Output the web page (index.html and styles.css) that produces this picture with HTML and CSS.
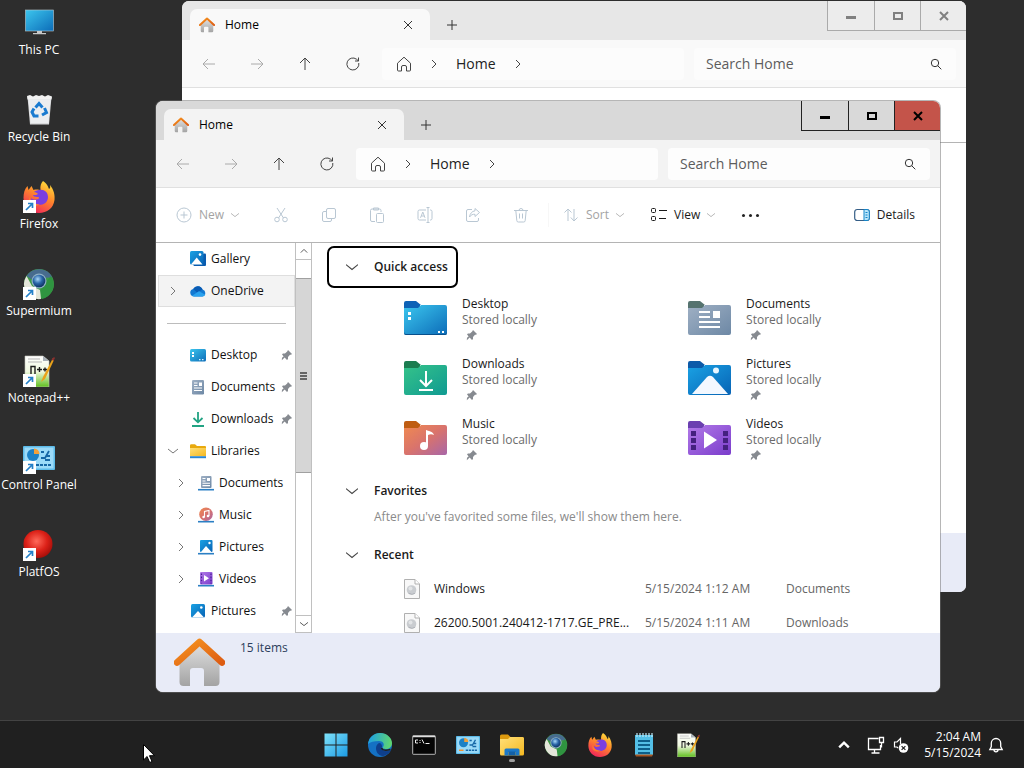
FILE: index.html
```html
<!DOCTYPE html>
<html lang="en">
<head>
	<meta charset="UTF-8">
	<title>Desktop</title>
	<link rel="stylesheet" href="styles.css">
</head>
<body>
	<!-- icon sprite -->
	<svg class="sprite" aria-hidden="true">
		<defs>
			<linearGradient id="gBlue" x1="0" y1="0" x2="1" y2="1"><stop offset="0" stop-color="#3cc6ee"/><stop offset="1" stop-color="#0c6cb8"/></linearGradient>
			<linearGradient id="gGreen" x1="0" y1="0" x2="1" y2="1"><stop offset="0" stop-color="#35c389"/><stop offset="1" stop-color="#109a92"/></linearGradient>
			<linearGradient id="gMusic" x1="0" y1="0" x2="1" y2="1"><stop offset="0" stop-color="#f08a50"/><stop offset=".5" stop-color="#d9736c"/><stop offset="1" stop-color="#a866a8"/></linearGradient>
			<linearGradient id="gDoc" x1="0" y1="0" x2="1" y2="1"><stop offset="0" stop-color="#9fb0c4"/><stop offset="1" stop-color="#6d88a5"/></linearGradient>
			<linearGradient id="gPic" x1="0" y1="0" x2="1" y2="1"><stop offset="0" stop-color="#1aa2e4"/><stop offset="1" stop-color="#0763b5"/></linearGradient>
			<linearGradient id="gVid" x1="0" y1="0" x2="1" y2="1"><stop offset="0" stop-color="#b27ae8"/><stop offset="1" stop-color="#7a3ccb"/></linearGradient>
			<linearGradient id="gYellow" x1="0" y1="0" x2="1" y2="1"><stop offset="0" stop-color="#ffe07a"/><stop offset="1" stop-color="#f5b820"/></linearGradient>
			<linearGradient id="gWin" x1="0" y1="0" x2="1" y2="1"><stop offset="0" stop-color="#7fe3fb"/><stop offset="1" stop-color="#1c9be4"/></linearGradient>
			<linearGradient id="gWall" x1="0" y1="0" x2="0" y2="1"><stop offset="0" stop-color="#dedede"/><stop offset="1" stop-color="#a3a3a3"/></linearGradient>
			<linearGradient id="gRoof" x1="0" y1="0" x2="1" y2="1"><stop offset="0" stop-color="#f69420"/><stop offset="1" stop-color="#dd5c12"/></linearGradient>
			<linearGradient id="gFox" x1=".8" y1="0" x2=".3" y2="1"><stop offset="0" stop-color="#ffe23e"/><stop offset=".45" stop-color="#ff8a2a"/><stop offset="1" stop-color="#f0235c"/></linearGradient>
			<linearGradient id="gEdge" x1="0" y1=".3" x2="1" y2=".4"><stop offset="0" stop-color="#1c9fe6"/><stop offset="1" stop-color="#60d66e"/></linearGradient>
			<linearGradient id="gNpp" x1="0" y1="0" x2="0" y2="1"><stop offset="0" stop-color="#ffffff"/><stop offset=".5" stop-color="#f0f8e0"/><stop offset="1" stop-color="#5fbf1e"/></linearGradient>
			<radialGradient id="gRed" cx=".45" cy=".4" r=".6"><stop offset="0" stop-color="#ff6a5a"/><stop offset=".6" stop-color="#dc2118"/><stop offset="1" stop-color="#a80f0a"/></radialGradient>
			<radialGradient id="gBall" cx=".4" cy=".35" r=".7"><stop offset="0" stop-color="#a8d8f8"/><stop offset=".5" stop-color="#2a66a8"/><stop offset="1" stop-color="#0b2b5c"/></radialGradient>
		</defs>

		<symbol id="i-house" viewBox="0 0 51 49">
			<path d="M25.500 7 8 23v21a4 4 0 0 0 4 4h6.500V33a3 3 0 0 1 3-3h8a3 3 0 0 1 3 3v15H44a4 4 0 0 0 4-4V23z" transform="translate(-2.500 0)" fill="url(#gWall)"/>
			<path d="M3 24.500 25.500 4 48 24.500" fill="none" stroke="url(#gRoof)" stroke-width="6.500" stroke-linecap="round" stroke-linejoin="round"/>
		</symbol>

		<symbol id="i-back" viewBox="0 0 16 16"><path d="M14 8H2M7 3 2 8l5 5"/></symbol>
		<symbol id="i-forward" viewBox="0 0 16 16"><path d="M2 8h12M9 3l5 5-5 5"/></symbol>
		<symbol id="i-up" viewBox="0 0 16 16"><path d="M8 14V2M3 7l5-5 5 5"/></symbol>
		<symbol id="i-refresh" viewBox="0 0 16 16"><path d="M13.800 7A6 6 0 1 1 11.500 3.200l1.800 1.600M13.500 1.500v3.500H10"/></symbol>
		<symbol id="i-home" viewBox="0 0 16 16"><path d="M1.500 7.200 8 1.200l6.500 6V14a1 1 0 0 1-1 1h-3v-4a1.500 1.500 0 0 0-1.500-1.500H7A1.500 1.500 0 0 0 5.500 11v4h-3a1 1 0 0 1-1-1z"/></symbol>
		<symbol id="i-right" viewBox="0 0 10 10"><path d="M3 1l4 4-4 4"/></symbol>
		<symbol id="i-down" viewBox="0 0 10 10"><path d="M0 3l5 4 5-4"/></symbol>
		<symbol id="i-upchev" viewBox="0 0 10 10"><path d="M1 7l4-4 4 4"/></symbol>
		<symbol id="i-search" viewBox="0 0 12 12"><circle cx="5" cy="5" r="3.700"/><path d="M7.700 7.700 11.300 11.300"/></symbol>
		<symbol id="i-x" viewBox="0 0 10 10"><path d="M1 1l8 8M9 1 1 9"/></symbol>
		<symbol id="i-plus" viewBox="0 0 10 10"><path d="M5 0v10M0 5h10"/></symbol>

		<symbol id="i-new" viewBox="0 0 16 16"><circle cx="8" cy="8" r="7"/><path d="M8 4.500v7M4.500 8h7"/></symbol>
		<symbol id="i-cut" viewBox="0 0 16 16"><path d="M4 1l6.500 10M12 1 5.500 11"/><circle cx="4" cy="12.500" r="2.300"/><circle cx="12" cy="12.500" r="2.300"/></symbol>
		<symbol id="i-copy" viewBox="0 0 16 16"><rect x="5.500" y="1.500" width="9" height="10" rx="1.500"/><path d="M5.500 4.500H3A1.500 1.500 0 0 0 1.500 6v7A1.500 1.500 0 0 0 3 14.500h6a1.500 1.500 0 0 0 1.500-1.500v-1.500"/></symbol>
		<symbol id="i-paste" viewBox="0 0 16 16"><path d="M6 14.500H3A1.500 1.500 0 0 1 1.500 13V3.500A1.500 1.500 0 0 1 3 2h7.500A1.500 1.500 0 0 1 12 3.500V5M4.500 1h5v2h-5z"/><rect x="7.500" y="6.500" width="7" height="9" rx="1"/></symbol>
		<symbol id="i-rename" viewBox="0 0 16 16"><path d="M9 3H2.500A1.500 1.500 0 0 0 1 4.500v7A1.500 1.500 0 0 0 2.500 13H9M13 3h.5A1.500 1.500 0 0 1 15 4.500v7a1.500 1.500 0 0 1-1.500 1.500H13M11 .5v15M9.500 .5h3M9.500 15.500h3M3.500 10.800 5.800 5l2.200 5.800M4.300 9h3"/></symbol>
		<symbol id="i-share" viewBox="0 0 16 16"><path d="M7 2.500H3A1.500 1.500 0 0 0 1.500 4v9A1.500 1.500 0 0 0 3 14.500h9a1.500 1.500 0 0 0 1.500-1.500v-2M10 1.500l4.500 4-4.500 4V7.300C7.500 7 6 8 4.500 10 5 6.500 7 4.200 10 3.800z"/></symbol>
		<symbol id="i-delete" viewBox="0 0 16 16"><path d="M1 3.500h14M6 3.500a2 2 0 0 1 4 0M2.800 3.500l1 10a1.500 1.500 0 0 0 1.500 1.500h5.400a1.500 1.500 0 0 0 1.500-1.500l1-10M6.500 6.500v5M9.500 6.500v5"/></symbol>
		<symbol id="i-sort" viewBox="0 0 16 16"><path d="M5 14V2M1.500 5.500 5 2l3.500 3.500M11 2v12M7.800 10.500 11 14l3.500-3.500"/></symbol>
		<symbol id="i-view" viewBox="0 0 16 16"><rect x=".5" y="1.500" width="4" height="4" rx="1"/><rect x=".5" y="9.500" width="4" height="4" rx="1"/><path d="M8 3.500h8M8 11.500h7"/></symbol>
		<symbol id="i-details" viewBox="0 0 16 16"><rect x=".7" y="2.500" width="14.600" height="11" rx="2.500" fill="none" stroke="#355e86" stroke-width="1.200"/><path d="M10 2.500h3a2.300 2.300 0 0 1 2.300 2.500v6a2.300 2.300 0 0 1-2.300 2.500h-3z" fill="#b9e6fb" stroke="#1585c8"/><path d="M11.500 5.500h2M11.500 8h2M11.500 10.500h2" stroke="#1585c8"/></symbol>

		<symbol id="i-pin" viewBox="0 0 12 12"><path d="M7 1l4 4-1 .7-1 .1-2 2.200v2L6 11 3.600 8.400 .8 11.200 1 8.800 2.600 7.400 1 5.200l1-.8h2L6.200 2.600z" fill="#868a90"/></symbol>
		<symbol id="i-gallery" viewBox="0 0 16 16"><path d="M13.500 2.500H15a1 1 0 0 1 1 1V14a1 1 0 0 1-1 1H4l-1-1.500z" fill="#0a5bae"/><rect x="0" y="0" width="13.500" height="13.500" rx="1.500" fill="url(#gPic)"/><path d="M1 13.500 6.700 6.500l5.800 7z" fill="#fff"/><circle cx="10" cy="3.600" r="1.300" fill="#fff"/></symbol>
		<symbol id="i-cloud" viewBox="0 0 16 16"><path d="M4 13.500a3.800 3.800 0 0 1-.8-7.500A5.200 5.200 0 0 1 12.600 6.500 3.600 3.600 0 0 1 12.500 13.500z" fill="#1379d2"/><path d="M3.200 6A5.200 5.200 0 0 1 12.600 6.500L7 9.500z" fill="#0a5cb4"/><path d="M2 12.800 9 8.200l6.300 3.500a3.500 3.500 0 0 1-2.800 1.800H4z" fill="#2aa2ee"/></symbol>
		<symbol id="i-desktop" viewBox="0 0 16 16"><rect x="0" y="2" width="16" height="12.500" rx="1.500" fill="url(#gBlue)"/><path d="M2 5h2v2H2zM2 8h2v2H2z" fill="#fff"/><path d="M9 12h1.500v1.200H9zM12 12h1.500v1.200H12z" fill="#d7f2ff"/></symbol>
		<symbol id="i-docs" viewBox="0 0 16 16"><rect x="2" y="1" width="12" height="14.500" rx="1.200" fill="url(#gDoc)"/><path d="M4 4h3.500M4 6.500h3.500M4 9h8M4 11.500h8" stroke="#fff" stroke-width="1.200"/><path d="M9 3.500h3v3.500H9z" fill="#fff"/></symbol>
		<symbol id="i-dl" viewBox="0 0 16 16"><path d="M8 1v10M3.500 7 8 11.300 12.500 7M2 15h12" fill="none" stroke="#22a383" stroke-width="1.800"/></symbol>
		<symbol id="i-libs" viewBox="0 0 16 16"><path d="M0 2.500A1.200 1.200 0 0 1 1.200 1.300H5l2 1.700h7.500A1.200 1.200 0 0 1 16 4.500V12H0z" fill="#e8a90e"/><path d="M0 5h16v8H0z" fill="url(#gYellow)"/><path d="M0 14.200h16" stroke="#2b86d1" stroke-width="2"/></symbol>
		<symbol id="i-ldoc" viewBox="0 0 16 16"><rect x="3" y="1" width="10.500" height="12" rx="1" fill="url(#gDoc)"/><path d="M4.500 3.500h3M4.500 6h3M4.500 8.300h7.500M4.500 10.600h7.500" stroke="#fff" stroke-width="1.100"/><path d="M9 3h3v3H9z" fill="#fff"/><path d="M0 14.700h16" stroke="#2b7fc4" stroke-width="1.600"/></symbol>
		<symbol id="i-lmusic" viewBox="0 0 16 16"><circle cx="8" cy="7.300" r="6.800" fill="url(#gMusic)"/><path d="M6.500 10V4.500l4.500-1V9" fill="none" stroke="#fff" stroke-width="1.100"/><circle cx="5.600" cy="10" r="1.300" fill="#fff"/><circle cx="10" cy="9" r="1.300" fill="#fff"/><path d="M0 14.700h16" stroke="#2b7fc4" stroke-width="1.600"/></symbol>
		<symbol id="i-lpic" viewBox="0 0 16 16"><rect x="2" y="1" width="12.500" height="12" rx="1" fill="url(#gPic)"/><path d="M3 13 8 7l5.500 6z" fill="#fff"/><circle cx="11.500" cy="4" r="1.200" fill="#fff"/><path d="M0 14.700h16" stroke="#2b7fc4" stroke-width="1.600"/></symbol>
		<symbol id="i-lvid" viewBox="0 0 16 16"><rect x="2" y="1" width="12.500" height="12.500" rx="1" fill="url(#gVid)"/><path d="M6 4l5 3.200-5 3.200z" fill="#fff"/><path d="M3.500 2.500v10M13 2.500v10" stroke="#4a1f96" stroke-width="1.200" stroke-dasharray="1.600 1.500"/><path d="M0 14.700h16" stroke="#2b7fc4" stroke-width="1.600"/></symbol>
		<symbol id="i-pic" viewBox="0 0 16 16"><rect x="1" y="1" width="14" height="13.500" rx="1.500" fill="url(#gPic)"/><path d="M2 14.500 8 8l6 6.500z" fill="#fff"/><circle cx="11.300" cy="4.500" r="1.300" fill="#fff"/></symbol>

		<symbol id="f-desktop" viewBox="0 0 43 34"><path d="M0 8V2a2 2 0 0 1 2-2h10l5 4h-1v4z" fill="#0e62b6"/><path d="M0 7h14l3-3h24a2 2 0 0 1 2 2v26a2 2 0 0 1-2 2H2a2 2 0 0 1-2-2z" fill="url(#gBlue)"/><path d="M0 31a2 2 0 0 0 2 2h39a2 2 0 0 0 2-2v1a2 2 0 0 1-2 2H2a2 2 0 0 1-2-2z" fill="#08508c"/><path d="M4 11h3v3H4zM4 16h3v3H4zM34 30h2v2h-2zM38 30h2v2h-2z" fill="#fff"/></symbol>
		<symbol id="f-downloads" viewBox="0 0 43 34"><path d="M0 8V2a2 2 0 0 1 2-2h10l5 4h-1v4z" fill="#1c7c50"/><path d="M0 7h14l3-3h24a2 2 0 0 1 2 2v26a2 2 0 0 1-2 2H2a2 2 0 0 1-2-2z" fill="url(#gGreen)"/><path d="M22 10v15M16 19l6 6 6-6M15 29h14" fill="none" stroke="#fff" stroke-width="2"/></symbol>
		<symbol id="f-music" viewBox="0 0 43 34"><path d="M0 8V2a2 2 0 0 1 2-2h10l5 4h-1v4z" fill="#bf5d12"/><path d="M0 7h14l3-3h24a2 2 0 0 1 2 2v26a2 2 0 0 1-2 2H2a2 2 0 0 1-2-2z" fill="url(#gMusic)"/><circle cx="20" cy="25" r="4" fill="#fff"/><path d="M22 25V9c2 1 7 1 8 5-2-1-4-1-6 0v11z" fill="#fff"/></symbol>
		<symbol id="f-documents" viewBox="0 0 43 34"><path d="M0 8V2a2 2 0 0 1 2-2h10l5 4h-1v4z" fill="#55736f"/><path d="M0 7h14l3-3h24a2 2 0 0 1 2 2v26a2 2 0 0 1-2 2H2a2 2 0 0 1-2-2z" fill="url(#gDoc)"/><path d="M11 11h11M11 16h11M11 21h21M11 26h21" stroke="#fff" stroke-width="2"/><path d="M25 10h7v7h-7z" fill="#fff"/></symbol>
		<symbol id="f-pictures" viewBox="0 0 43 34"><path d="M0 8V2a2 2 0 0 1 2-2h10l5 4h-1v4z" fill="#0d5aa8"/><path d="M0 7h14l3-3h24a2 2 0 0 1 2 2v26a2 2 0 0 1-2 2H2a2 2 0 0 1-2-2z" fill="url(#gPic)"/><path d="M4 33 19 16q3-2.500 6 0L40 33z" fill="#f3f8ff"/><circle cx="28" cy="9.500" r="3" fill="#e8f6ff"/></symbol>
		<symbol id="f-videos" viewBox="0 0 43 34"><path d="M0 8V2a2 2 0 0 1 2-2h10l5 4h-1v4z" fill="#6a3fb0"/><path d="M0 7h14l3-3h24a2 2 0 0 1 2 2v26a2 2 0 0 1-2 2H2a2 2 0 0 1-2-2z" fill="url(#gVid)"/><path d="M16 10.500 29 19 16 27.500z" fill="#fff"/><path d="M3 10h5v5H3zM3 17h5v5H3zM3 24h5v5H3zM35 10h5v5h-5zM35 17h5v5h-5zM35 24h5v5h-5z" fill="#44207f"/></symbol>
		<symbol id="i-file" viewBox="0 0 16 20"><path d="M.5 .5h10.500l4.500 4.500v14.500H.5z" fill="#f8f8f8" stroke="#b0b0b0"/><path d="M11 .5V5h4.500" fill="#fff" stroke="#b0b0b0"/><circle cx="7.500" cy="11" r="4.800" fill="#c9ccd0"/><path d="M4 13.500a5 5 0 0 0 8 0 7 7 0 0 1-8 0z" fill="#979ba1"/><circle cx="6.500" cy="9.500" r="2" fill="#e2e4e6"/></symbol>

		<symbol id="d-pc" viewBox="0 0 32 32"><rect x="2.500" y="3" width="28" height="21" fill="url(#gBlue)" stroke="#b9c9d0" stroke-width=".6"/><path d="M14 24h5v2h4v1.200H10V26h4z" fill="#c8c8c8"/></symbol>
		<symbol id="d-bin" viewBox="0 0 32 32"><path d="M4.500 3h24l-2.500 27.500H7z" fill="#d9dadc"/><path d="M4 2l3 -1 3 1.500L13 1l3 1 3-1 3 1.500L25 1l4 1.500-.5 3H4.500z" fill="#f1f1f1"/><path d="M5.500 5.500h22L25.500 29h-18z" fill="#eceef0"/><path d="M12.500 13.500 16 9.500l3.500 4M21.500 14l2 4.500-4.500 2.500M15.500 22h-4.500l-2-4 2-3.500" fill="none" stroke="#1a7bd0" stroke-width="3"/></symbol>
		<symbol id="d-fox" viewBox="0 0 32 32"><path d="M20 0c4 3 5 5 6 8 2-1 1-3 1-4 4 5 5 10 4.500 15C30.500 27 24 32 16 32 7 32 .5 25.500 .5 17c0-5 1-9 4-12l1 4 3-4 2 4c3-1 6 0 7 0C17 5 18 2 20 0z" fill="url(#gFox)"/><path d="M16 9c5-1 9 2 9 7 0 5-4 8-9 8-4 0-8-3-8-7 2 2 4 2 7 1 2-1 1-2-1-2-2 0-4-1-4-2 2 0 4 0 5-1-1-1-2-2-4-2 1-1 3-2 5-2z" fill="#7a3fe0"/><path d="M6 15c1 6 6 9 11 8-3 3-9 2-11-2z" fill="#ff7a2e"/></symbol>
		<symbol id="d-super" viewBox="0 0 32 32"><circle cx="16" cy="16" r="15" fill="#3f9a46"/><path d="M16 16 3.500 8A15 15 0 0 1 29.500 9.500L16 10z" fill="#476c8e"/><path d="M28 8a15 15 0 0 1-9 23l-2-8 6-9z" fill="#2f9440"/><path d="M3.500 8A15 15 0 0 0 18 31l-1-9-8-4z" fill="#e4e6da"/><circle cx="16" cy="13" r="7.500" fill="#8fb0c4"/><circle cx="16" cy="13" r="6.300" fill="url(#gBall)"/></symbol>
		<symbol id="d-npp" viewBox="0 0 32 32"><path d="M2 1h18l6 5v26H2z" fill="url(#gNpp)" stroke="#c4c4b8" stroke-width=".6"/><path d="M20 1v5h6z" fill="#a8b0b8"/><path d="M5 4h12M5 7h14" stroke="#b5b5b5"/><path d="M8 20v-8.500h4V20M14 14.500h5M16.500 12v5M20 14.500h4M22 12.500v4" fill="none" stroke="#1c1c1c" stroke-width="1.400"/><path d="M30 3 20 22l-2 5 4-3L31 5z" fill="#e9a21a"/><path d="M28.500 4.500 31 2l1 1-1.500 3z" fill="#8b2f2f"/></symbol>
		<symbol id="d-cp" viewBox="0 0 32 32"><rect x="0" y="4" width="32" height="24" rx="1" fill="#5cbbe9"/><rect x="1.500" y="5.500" width="29" height="21" fill="#9bdaf8"/><circle cx="10" cy="13" r="6" fill="#1c81c6"/><path d="M11 12V6.500a5.500 5.500 0 0 1 5.500 5.500z" fill="#f2a13a"/><path d="M18 16h4l4-7M18 10h3M22 18h5M24 14h3" fill="none" stroke="#1667a6" stroke-width="1.800"/><path d="M4 23h6" stroke="#ef9333" stroke-width="2"/><path d="M13 23h15" stroke="#1667a6" stroke-width="2" stroke-dasharray="3 1"/></symbol>
		<symbol id="d-red" viewBox="0 0 32 32"><ellipse cx="15" cy="15" rx="14.500" ry="14" fill="url(#gRed)"/></symbol>
		<symbol id="d-link" viewBox="0 0 13 13"><path d="M0 0h13v13H0z" fill="#fff"/><path d="M3 10l6-6M5 3.500h4.500V8" fill="none" stroke="#2480c8" stroke-width="1.700"/></symbol>

		<symbol id="t-win" viewBox="0 0 24 24"><path d="M.5 .5h11v11H.5zM12.500 .5h11v11h-11zM.5 12.500h11v11H.5zM12.500 12.500h11v11h-11z" fill="url(#gWin)"/></symbol>
		<symbol id="t-edge" viewBox="0 0 24 24"><circle cx="12" cy="12" r="12" fill="#1471c3"/><path d="M0 11C1 4 6 0 12 0c7 0 12 5 12 10 0 4-3 6-6 6-2 0-4-1-3-2 2-3 0-6-4-6C6 8 2 9 0 11z" fill="url(#gEdge)"/><path d="M8 15c0-3 2-5 4-5 2 1 2 3 2 4-1 2 1 4 4 4 2 0 3 0 5-1-2 4-6 6-9 6-4-1-6-4-6-8z" fill="#0e3f8c"/><path d="M13.500 15c1 2 4 3 9 1.500" fill="none" stroke="#202020" stroke-width="1.500"/></symbol>
		<symbol id="t-cmd" viewBox="0 0 24 24"><rect x=".7" y="2.700" width="22.600" height="18.600" rx=".5" fill="#050505" stroke="#b5b5b5"/><path d="M1 3.500h22" stroke="#dedede" stroke-width="1.500"/><path d="M6 7H3.500v3H6M8 7v1M8 9v1M10 6.500l2 4M13.500 10.500h4" fill="none" stroke="#eee"/></symbol>
		<symbol id="t-folder" viewBox="0 0 24 24"><path d="M0 3a1.500 1.500 0 0 1 1.500-1.500H8L10.500 4H22a2 2 0 0 1 2 2v6H0z" fill="#dd9a0e"/><path d="M0 6h8l2-2h12.500A1.500 1.500 0 0 1 24 5.500V21a1.500 1.500 0 0 1-1.500 1.500h-21A1.500 1.500 0 0 1 0 21z" fill="url(#gYellow)"/><path d="M4.500 22.500V17A1.500 1.500 0 0 1 6 15.500h12a1.500 1.500 0 0 1 1.500 1.500v5.500h-4V19h-7v3.500z" fill="#1b78c8"/><path d="M8.500 18.500h7v4h-7z" fill="#1261a8"/></symbol>
		<symbol id="t-notes" viewBox="0 0 24 24"><path d="M3 2h18v20H3z" fill="#53bfe6"/><path d="M3 21.500h18l-1 2H4z" fill="#a85420"/><path d="M6 8h12M6 12h12M6 16h12M6 20h12" stroke="#0d5f8a" stroke-width="1.800"/><path d="M5 0v4M8 0v4M11 0v4M14 0v4M17 0v4M20 0v4" stroke="#bfe9f8" stroke-width="1.200"/></symbol>
		<symbol id="t-net" viewBox="0 0 18 18"><path d="M11.500 2.500h-10v11h12V9M7.500 13.500V17M4.500 17h8M12.500 1.500h4v5h-4zM14.500 6.500v5" fill="none" stroke="#fff" stroke-width="1.300"/></symbol>
		<symbol id="t-sound" viewBox="0 0 18 18"><path d="M8.500 8V2.500L5 6H2.500v5H5l1 1" fill="none" stroke="#fff" stroke-width="1.200"/><circle cx="11.500" cy="12" r="4.800" fill="#fff"/><path d="M9.600 10.100l3.800 3.800M13.400 10.100l-3.800 3.800" stroke="#202020" stroke-width="1.200"/></symbol>
		<symbol id="t-bell" viewBox="0 0 16 16"><path d="M8 1.500a4.700 4.700 0 0 0-4.700 4.700V9.500L1.800 12.500h12.400L12.700 9.500V6.200A4.700 4.700 0 0 0 8 1.500zM6 12.800a2 2 0 0 0 4 0" fill="none" stroke="#fff" stroke-width="1.300"/></symbol>
	</svg>

	<main class="desktop">
		<ul class="shortcuts">
			<li><a href="#"><span class="pic"><svg><use href="#d-pc"/></svg></span>This PC</a></li>
			<li><a href="#"><span class="pic"><svg><use href="#d-bin"/></svg></span>Recycle Bin</a></li>
			<li><a href="#"><span class="pic"><svg><use href="#d-fox"/></svg><svg class="link"><use href="#d-link"/></svg></span>Firefox</a></li>
			<li><a href="#"><span class="pic"><svg><use href="#d-super"/></svg><svg class="link"><use href="#d-link"/></svg></span>Supermium</a></li>
			<li><a href="#"><span class="pic"><svg><use href="#d-npp"/></svg><svg class="link"><use href="#d-link"/></svg></span>Notepad++</a></li>
			<li><a href="#"><span class="pic"><svg><use href="#d-cp"/></svg><svg class="link"><use href="#d-link"/></svg></span>Control Panel</a></li>
			<li><a href="#"><span class="pic"><svg><use href="#d-red"/></svg><svg class="link"><use href="#d-link"/></svg></span>PlatfOS</a></li>
		</ul>

		<!-- inactive window -->
		<section class="window inactive" aria-label="Home, inactive">
			<header class="titlebar">
				<div class="tab">
					<svg class="i16"><use href="#i-house"/></svg>
					<span class="tab-name">Home</span>
					<button class="tab-close" aria-label="Close tab"><svg class="line i10"><use href="#i-x"/></svg></button>
				</div>
				<button class="tab-add" aria-label="New tab"><svg class="line i10"><use href="#i-plus"/></svg></button>
				<div class="controls">
					<button aria-label="Minimize"><span class="min"></span></button>
					<button aria-label="Maximize"><span class="max"></span></button>
					<button class="close" aria-label="Close"><svg class="line i10"><use href="#i-x"/></svg></button>
				</div>
			</header>
			<nav class="navbar">
				<button class="off" aria-label="Back"><svg class="line i16"><use href="#i-back"/></svg></button>
				<button class="off" aria-label="Forward"><svg class="line i16"><use href="#i-forward"/></svg></button>
				<button aria-label="Up"><svg class="line i16"><use href="#i-up"/></svg></button>
				<button aria-label="Refresh"><svg class="line i16"><use href="#i-refresh"/></svg></button>
				<div class="address">
					<svg class="line i16"><use href="#i-home"/></svg>
					<svg class="line i10"><use href="#i-right"/></svg>
					<a href="#">Home</a>
					<svg class="line i10"><use href="#i-right"/></svg>
				</div>
				<label class="search">
					<input type="text" placeholder="Search Home" aria-label="Search Home">
					<svg class="line i12"><use href="#i-search"/></svg>
				</label>
			</nav>
			<div class="toolbar"></div>
			<div class="body"></div>
			<footer class="status"></footer>
		</section>

		<!-- active window -->
		<section class="window active" aria-label="Home">
			<header class="titlebar">
				<div class="tab">
					<svg class="i16"><use href="#i-house"/></svg>
					<span class="tab-name">Home</span>
					<button class="tab-close" aria-label="Close tab"><svg class="line i10"><use href="#i-x"/></svg></button>
				</div>
				<button class="tab-add" aria-label="New tab"><svg class="line i10"><use href="#i-plus"/></svg></button>
				<div class="controls">
					<button aria-label="Minimize"><span class="min"></span></button>
					<button aria-label="Maximize"><span class="max"></span></button>
					<button class="close" aria-label="Close"><svg class="line i10"><use href="#i-x"/></svg></button>
				</div>
			</header>
			<nav class="navbar">
				<button class="off" aria-label="Back"><svg class="line i16"><use href="#i-back"/></svg></button>
				<button class="off" aria-label="Forward"><svg class="line i16"><use href="#i-forward"/></svg></button>
				<button aria-label="Up"><svg class="line i16"><use href="#i-up"/></svg></button>
				<button aria-label="Refresh"><svg class="line i16"><use href="#i-refresh"/></svg></button>
				<div class="address">
					<svg class="line i16"><use href="#i-home"/></svg>
					<svg class="line i10"><use href="#i-right"/></svg>
					<a href="#">Home</a>
					<svg class="line i10"><use href="#i-right"/></svg>
				</div>
				<label class="search">
					<input type="text" placeholder="Search Home" aria-label="Search Home">
					<svg class="line i12"><use href="#i-search"/></svg>
				</label>
			</nav>
			<div class="toolbar">
				<button class="new" disabled><svg class="line i16"><use href="#i-new"/></svg>New<svg class="line i8"><use href="#i-down"/></svg></button>
				<button class="tool" disabled aria-label="Cut"><svg class="line i16"><use href="#i-cut"/></svg></button>
				<button class="tool" disabled aria-label="Copy"><svg class="line i16"><use href="#i-copy"/></svg></button>
				<button class="tool" disabled aria-label="Paste"><svg class="line i16"><use href="#i-paste"/></svg></button>
				<button class="tool" disabled aria-label="Rename"><svg class="line i16"><use href="#i-rename"/></svg></button>
				<button class="tool" disabled aria-label="Share"><svg class="line i16"><use href="#i-share"/></svg></button>
				<button class="tool" disabled aria-label="Delete"><svg class="line i16"><use href="#i-delete"/></svg></button>
				<span class="divider"></span>
				<button class="menu" disabled><svg class="line i16"><use href="#i-sort"/></svg>Sort<svg class="line i8"><use href="#i-down"/></svg></button>
				<button class="menu"><svg class="line i16"><use href="#i-view"/></svg>View<svg class="line i8"><use href="#i-down"/></svg></button>
				<button class="more" aria-label="See more"><span></span><span></span><span></span></button>
				<button class="menu details"><svg class="i16"><use href="#i-details"/></svg>Details</button>
			</div>

			<div class="body">
				<nav class="tree">
					<ul>
						<li><span class="twist"></span><svg class="i16"><use href="#i-gallery"/></svg><a href="#">Gallery</a></li>
						<li class="selected"><span class="twist"><svg class="line i10"><use href="#i-right"/></svg></span><svg class="i16"><use href="#i-cloud"/></svg><a href="#">OneDrive</a></li>
						<li class="rule"></li>
						<li><span class="twist"></span><svg class="i16"><use href="#i-desktop"/></svg><a href="#">Desktop</a><svg class="pin"><use href="#i-pin"/></svg></li>
						<li><span class="twist"></span><svg class="i16"><use href="#i-docs"/></svg><a href="#">Documents</a><svg class="pin"><use href="#i-pin"/></svg></li>
						<li><span class="twist"></span><svg class="i16"><use href="#i-dl"/></svg><a href="#">Downloads</a><svg class="pin"><use href="#i-pin"/></svg></li>
						<li><span class="twist"><svg class="line i10"><use href="#i-down"/></svg></span><svg class="i16"><use href="#i-libs"/></svg><a href="#">Libraries</a></li>
						<li class="sub"><span class="twist"><svg class="line i10"><use href="#i-right"/></svg></span><svg class="i16"><use href="#i-ldoc"/></svg><a href="#">Documents</a></li>
						<li class="sub"><span class="twist"><svg class="line i10"><use href="#i-right"/></svg></span><svg class="i16"><use href="#i-lmusic"/></svg><a href="#">Music</a></li>
						<li class="sub"><span class="twist"><svg class="line i10"><use href="#i-right"/></svg></span><svg class="i16"><use href="#i-lpic"/></svg><a href="#">Pictures</a></li>
						<li class="sub"><span class="twist"><svg class="line i10"><use href="#i-right"/></svg></span><svg class="i16"><use href="#i-lvid"/></svg><a href="#">Videos</a></li>
						<li><span class="twist"></span><svg class="i16"><use href="#i-pic"/></svg><a href="#">Pictures</a><svg class="pin"><use href="#i-pin"/></svg></li>
					</ul>
				</nav>
				<div class="scrollbar">
					<button aria-label="Scroll up"><svg class="line i8"><use href="#i-upchev"/></svg></button>
					<div class="track">
						<div class="thumb"><span></span><span></span><span></span></div>
					</div>
					<button aria-label="Scroll down"><svg class="line i8"><use href="#i-down"/></svg></button>
				</div>

				<div class="content">
					<button class="group focused"><svg class="line i12"><use href="#i-down"/></svg>Quick access</button>
					<div class="tiles">
						<a class="tile" href="#"><svg class="folder"><use href="#f-desktop"/></svg><span class="info"><span>Desktop</span><span class="where">Stored locally</span><svg class="pin"><use href="#i-pin"/></svg></span></a>
						<a class="tile" href="#"><svg class="folder"><use href="#f-documents"/></svg><span class="info"><span>Documents</span><span class="where">Stored locally</span><svg class="pin"><use href="#i-pin"/></svg></span></a>
						<a class="tile" href="#"><svg class="folder"><use href="#f-downloads"/></svg><span class="info"><span>Downloads</span><span class="where">Stored locally</span><svg class="pin"><use href="#i-pin"/></svg></span></a>
						<a class="tile" href="#"><svg class="folder"><use href="#f-pictures"/></svg><span class="info"><span>Pictures</span><span class="where">Stored locally</span><svg class="pin"><use href="#i-pin"/></svg></span></a>
						<a class="tile" href="#"><svg class="folder"><use href="#f-music"/></svg><span class="info"><span>Music</span><span class="where">Stored locally</span><svg class="pin"><use href="#i-pin"/></svg></span></a>
						<a class="tile" href="#"><svg class="folder"><use href="#f-videos"/></svg><span class="info"><span>Videos</span><span class="where">Stored locally</span><svg class="pin"><use href="#i-pin"/></svg></span></a>
					</div>
					<button class="group"><svg class="line i12"><use href="#i-down"/></svg>Favorites</button>
					<p class="hint">After you've favorited some files, we'll show them here.</p>
					<button class="group"><svg class="line i12"><use href="#i-down"/></svg>Recent</button>
					<table class="recent">
						<tr>
							<td class="c-icon"><svg class="file"><use href="#i-file"/></svg></td>
							<td class="c-name">Windows</td>
							<td class="c-date">5/15/2024 1:12 AM</td>
							<td class="c-place">Documents</td>
						</tr>
						<tr>
							<td class="c-icon"><svg class="file"><use href="#i-file"/></svg></td>
							<td class="c-name">26200.5001.240412-1717.GE_PRE...</td>
							<td class="c-date">5/15/2024 1:11 AM</td>
							<td class="c-place">Downloads</td>
						</tr>
					</table>
				</div>
			</div>
			<footer class="status">
				<svg class="big-house"><use href="#i-house"/></svg>
				<span>15 items</span>
			</footer>
		</section>
	</main>

	<footer class="taskbar">
		<div class="apps">
			<button aria-label="Start"><svg><use href="#t-win"/></svg></button>
			<button aria-label="Edge"><svg><use href="#t-edge"/></svg></button>
			<button aria-label="Command Prompt"><svg><use href="#t-cmd"/></svg></button>
			<button aria-label="Control Panel"><svg><use href="#d-cp"/></svg></button>
			<button class="running" aria-label="File Explorer"><svg><use href="#t-folder"/></svg></button>
			<button aria-label="Supermium"><svg><use href="#d-super"/></svg></button>
			<button aria-label="Firefox"><svg><use href="#d-fox"/></svg></button>
			<button aria-label="Notepad"><svg><use href="#t-notes"/></svg></button>
			<button aria-label="Notepad++"><svg><use href="#d-npp"/></svg></button>
		</div>
		<div class="tray">
			<button aria-label="Show hidden icons"><svg class="line i12 caret"><use href="#i-upchev"/></svg></button>
			<button aria-label="Network"><svg class="i18"><use href="#t-net"/></svg></button>
			<button aria-label="Volume"><svg class="i18"><use href="#t-sound"/></svg></button>
			<button class="clock"><span>2:04 AM</span><span>5/15/2024</span></button>
			<button aria-label="Notifications"><svg class="i16"><use href="#t-bell"/></svg></button>
		</div>
	</footer>

	<svg class="cursor" viewBox="0 0 12 19" aria-hidden="true"><path d="M.5 .5v15.500l3.600-3.500 2.600 6 2.300-1-2.500-5.800h5z" fill="#fff" stroke="#000"/></svg>
</body>
</html>
```

FILE: styles.css
```css
*{
	box-sizing: border-box;
}
body{
	margin: 0;
	height: 100vh;
	display: flex;
	flex-direction: column;
	overflow: hidden;
	background-color: #2d2d2d;
	color: #1a1a1a;
	font-family: "Open Sans", "Noto Sans", sans-serif;
	font-size: 12px;
	line-height: 16px;
}
ul,li{
	margin: 0;
	padding: 0;
	list-style: none;
}
a{
	color: inherit;
	text-decoration: none;
}
button,input{
	margin: 0;
	padding: 0;
	border: none;
	background: none;
	color: inherit;
	font: inherit;
}
svg{
	display: block;
	flex: none;
}
.sprite{
	position: absolute;
	width: 0;
	height: 0;
}
.line{
	fill: none;
	stroke: currentColor;
	stroke-width: 1;
}
.i8{
	width: 8px;
	height: 8px;
}
.i10{
	width: 10px;
	height: 10px;
}
.i12{
	width: 12px;
	height: 12px;
}
.i16{
	width: 16px;
	height: 16px;
}
.i18{
	width: 18px;
	height: 18px;
}
.pin{
	width: 12px;
	height: 12px;
}

/* desktop */
.desktop{
	position: relative;
	flex: 1;
	min-height: 0;
}
.shortcuts{
	width: 78px;
	padding-top: 7px;
}
.shortcuts li{
	height: 87px;
}
.shortcuts a{
	display: flex;
	flex-direction: column;
	align-items: center;
	gap: 3px;
	color: #fff;
	white-space: nowrap;
}
.pic{
	position: relative;
}
.pic svg{
	width: 32px;
	height: 32px;
}
.pic .link{
	position: absolute;
	left: 0;
	bottom: 0;
	width: 13px;
	height: 13px;
}

/* windows */
.window{
	position: absolute;
	display: flex;
	flex-direction: column;
	overflow: hidden;
	border-radius: 7px;
	background-color: #fff;
}
.inactive{
	top: 1px;
	left: 182px;
	right: 58px;
	bottom: 128px;
}
.active{
	top: 101px;
	left: 156px;
	right: 84px;
	bottom: 28px;
	box-shadow: 0 0 0 1px rgba(110, 110, 110, 0.5);
}
.titlebar{
	display: flex;
	height: 39px;
	padding-left: 8px;
	background-color: #d9d9d9;
}
.inactive .titlebar{
	background-color: #e7e7e7;
}
.tab{
	align-self: flex-end;
	display: flex;
	align-items: center;
	width: 240px;
	height: 31px;
	padding: 0 12px 0 9px;
	border-radius: 7px 7px 0 0;
	background-color: #f3f3f3;
	color: #000;
}
.inactive .tab{
	background-color: #f9f9f9;
}
.tab-name{
	flex: 1;
	padding-left: 10px;
	font-weight: 500;
}
.tab-close,.tab-add{
	display: flex;
	align-items: center;
	justify-content: center;
	width: 20px;
	height: 30px;
	color: #333;
}
.tab-add{
	align-self: flex-end;
	width: 44px;
}
.controls{
	display: flex;
	height: 30px;
	margin-left: auto;
}
.controls button{
	display: flex;
	align-items: center;
	justify-content: center;
	width: 46px;
	border-left: 1px solid #222;
	border-bottom: 1px solid #222;
	color: #000;
}
.controls button:first-child{
	width: 47px;
}
.controls .close{
	background-color: #c4544a;
}
.controls .close svg{
	stroke-width: 2;
}
.min{
	width: 10px;
	height: 3px;
	margin-top: 4px;
	background-color: currentColor;
}
.max{
	width: 10px;
	height: 8px;
	border: 2px solid currentColor;
}
.inactive .controls button{
	border-color: #aaa;
	background-color: #ececec;
	color: #808080;
}
.navbar{
	display: flex;
	align-items: center;
	height: 48px;
	padding: 0 10px 0 3px;
	border-bottom: 1px solid #e0e0e0;
	background-color: #f3f3f3;
}
.inactive .navbar{
	background-color: #f9f9f9;
}
.navbar button{
	display: flex;
	justify-content: center;
	width: 48px;
	color: #444;
}
.navbar .off{
	color: #aaa;
}
.address,.search{
	display: flex;
	align-items: center;
	height: 32px;
	border-radius: 4px;
	background-color: #fdfdfd;
}
.inactive .address,.inactive .search{
	background-color: #fcfcfc;
}
.address{
	flex: 1;
	gap: 17px;
	margin: 0 10px 0 5px;
	padding-left: 14px;
	font-size: 14px;
	color: #222;
}
.address svg{
	color: #444;
}
.search{
	width: 262px;
	padding: 0 14px 0 12px;
	color: #333;
}
.search input{
	flex: 1;
	min-width: 0;
	font-size: 14px;
	outline: none;
}
.search input::placeholder{
	color: #5c5c5c;
	opacity: 1;
}
.toolbar{
	display: flex;
	align-items: center;
	height: 55px;
	padding: 0 16px 0 20px;
	border-bottom: 1px solid #b4b4b4;
}
.toolbar button{
	display: flex;
	align-items: center;
	color: #1a1a1a;
}
.toolbar button:disabled{
	color: #a3a3a3;
}
.toolbar button:disabled .i16{
	color: #b9c7d3;
}
.toolbar .i8{
	color: #a6a6a6;
}
.new,.menu{
	gap: 7px;
}
.new{
	width: 81px;
}
.toolbar .tool{
	justify-content: center;
	width: 48px;
}
.divider{
	width: 1px;
	height: 24px;
	margin: 0 14px 0 3px;
	background-color: #f7f7f7;
}
.toolbar .menu{
	margin-right: 27px;
}
.toolbar .more{
	gap: 4px;
}
.more span{
	width: 3px;
	height: 3px;
	border-radius: 2px;
	background-color: #222;
}
.toolbar .details{
	margin: 0 9px 0 auto;
}
.body{
	display: flex;
	flex: 1;
	min-height: 0;
}

/* navigation tree */
.tree{
	width: 139px;
	padding-left: 2px;
	overflow: hidden;
}
.tree li{
	display: flex;
	align-items: center;
	height: 32px;
	padding: 0 1px 0 6px;
	border: 1px solid transparent;
	white-space: nowrap;
	color: #111;
}
.tree .sub{
	padding-left: 14px;
}
.tree .selected{
	border-color: #dedede;
	background-color: #f3f3f3;
}
.tree .rule::after{
	content: '';
	flex: 1;
	height: 1px;
	margin: 0 7px 0 2px;
	background-color: #bcbcbc;
}
.tree a{
	flex: 1;
	padding-left: 5px;
}
.twist{
	display: flex;
	justify-content: center;
	width: 16px;
	margin-right: 9px;
	color: #777;
}
.scrollbar{
	display: flex;
	flex-direction: column;
	width: 17px;
	border: 1px solid #c0c0c0;
	border-top: none;
}
.scrollbar button{
	display: flex;
	align-items: center;
	justify-content: center;
	height: 17px;
	border-bottom: 1px solid #c0c0c0;
	color: #333;
}
.scrollbar button:last-child{
	border-top: 1px solid #c0c0c0;
	border-bottom: none;
}
.track{
	display: flex;
	flex: 1;
	flex-direction: column;
	padding-top: 18px;
}
.thumb{
	display: flex;
	flex-direction: column;
	align-items: center;
	justify-content: center;
	gap: 1px;
	height: 58%;
	border-top: 1px solid #a0a0a0;
	border-bottom: 1px solid #a0a0a0;
	background-color: #d6d6d6;
}
.thumb span{
	width: 7px;
	height: 2px;
	background-color: #666;
}

/* file list */
.content{
	flex: 1;
	min-width: 0;
	padding: 3px 0 0 15px;
	overflow: hidden;
}
.group{
	display: flex;
	align-items: center;
	gap: 16px;
	height: 34px;
	padding: 0 8px 0 17px;
	border: 2px solid transparent;
	font-weight: 600;
}
.group svg{
	color: #444;
}
.group.focused{
	height: 42px;
	border-color: #000;
	border-radius: 7px;
}
.tiles{
	display: grid;
	grid-template-columns: 53% 47%;
	margin: 2px 0 4px;
	padding-left: 77px;
}
.tile{
	display: flex;
	gap: 15px;
	height: 60px;
	padding-top: 6px;
}
.folder{
	width: 43px;
	height: 34px;
	margin-top: 5px;
}
.info{
	display: flex;
	flex-direction: column;
}
.info .pin{
	margin: 1px 0 0 4px;
}
.where{
	color: #6b6b6b;
}
.hint{
	margin: 0 0 12px 47px;
	line-height: 18px;
	color: #8a8a8a;
}
.recent{
	width: 100%;
	padding-left: 77px;
	border-spacing: 0;
	table-layout: fixed;
	white-space: nowrap;
}
.recent td{
	height: 34px;
	padding: 0;
}
.c-icon{
	width: 30px;
}
.c-name{
	width: 211px;
}
.c-date{
	width: 141px;
	color: #666;
}
.c-place{
	color: #666;
}
.file{
	width: 16px;
	height: 20px;
}
.status{
	display: flex;
	gap: 15px;
	height: 59px;
	padding: 5px 18px;
	background-color: #e8ebf7;
	color: #2c3e5c;
	line-height: 20px;
}
.big-house{
	width: 51px;
	height: 49px;
}

/* taskbar */
.taskbar{
	display: grid;
	grid-template-columns: 1fr auto 1fr;
	height: 48px;
	border-top: 1px solid #434343;
	background-color: #202020;
	color: #fff;
}
.apps{
	grid-column: 2;
	display: flex;
}
.apps button{
	position: relative;
	display: flex;
	align-items: center;
	justify-content: center;
	width: 44px;
}
.apps svg{
	width: 24px;
	height: 24px;
}
.running::after{
	content: '';
	position: absolute;
	left: 19px;
	bottom: 6px;
	width: 6px;
	height: 3px;
	border-radius: 2px;
	background-color: #a0a0a0;
}
.tray{
	display: flex;
	align-items: center;
	justify-content: flex-end;
	gap: 7px;
	padding-right: 20px;
}
.caret{
	margin-right: 10px;
	stroke-width: 2;
}
.clock{
	display: flex;
	flex-direction: column;
	align-items: flex-end;
	margin-left: 7px;
}
.cursor{
	position: absolute;
	left: 143px;
	top: 744px;
	width: 12px;
	height: 19px;
}
```
